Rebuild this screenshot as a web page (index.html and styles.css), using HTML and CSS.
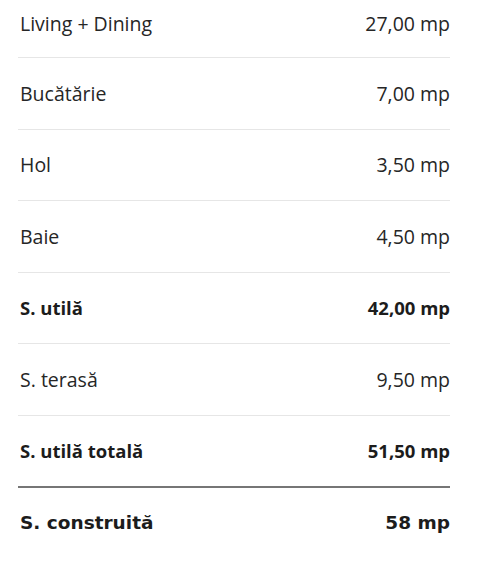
FILE: index.html
```html
<!DOCTYPE html>
<html lang="ro">
<head>
    <meta charset="UTF-8">
    <meta name="viewport" content="width=device-width, initial-scale=1.0">
    <title>Suprafețe</title>
    <link rel="stylesheet" href="styles.css">
</head>
<body>
    <div class="areas">
        <div class="row"><span>Living + Dining</span><span>27,00 mp</span></div>
        <div class="row"><span>Bucătărie</span><span>7,00 mp</span></div>
        <div class="row"><span>Hol</span><span>3,50 mp</span></div>
        <div class="row"><span>Baie</span><span>4,50 mp</span></div>
        <div class="row total"><span>S. utilă</span><span>42,00 mp</span></div>
        <div class="row"><span>S. terasă</span><span>9,50 mp</span></div>
        <div class="row total final"><span>S. utilă totală</span><span>51,50 mp</span></div>
        <div class="row total built"><span>S. construită</span><span>58 mp</span></div>
    </div>
</body>
</html>
```

FILE: styles.css
```css
body {
    margin: 0;
    background: #fff;
    font-family: "Open Sans", "Noto Sans", Arial, sans-serif;
    color: #262626;
}
.areas {
    width: 432px;
    margin-left: 18px;
}
.row {
    display: flex;
    justify-content: space-between;
    align-items: center;
    height: 70.5px;
    padding-left: 2px;
    font-size: 19.5px;
    border-bottom: 1px solid #e6e6e6;
}
.row:first-child {
    height: 46px;
    padding-bottom: 11px;
}
.total {
    font-weight: 700;
    font-size: 18.5px;
    color: #1c1c1c;
}
.final {
    border-bottom: 2px solid #767676;
    height: 70px;
}
.built {
    border-bottom: none;
    font-family: "DejaVu Sans", "Open Sans", sans-serif;
    font-size: 18.5px;
}
```
